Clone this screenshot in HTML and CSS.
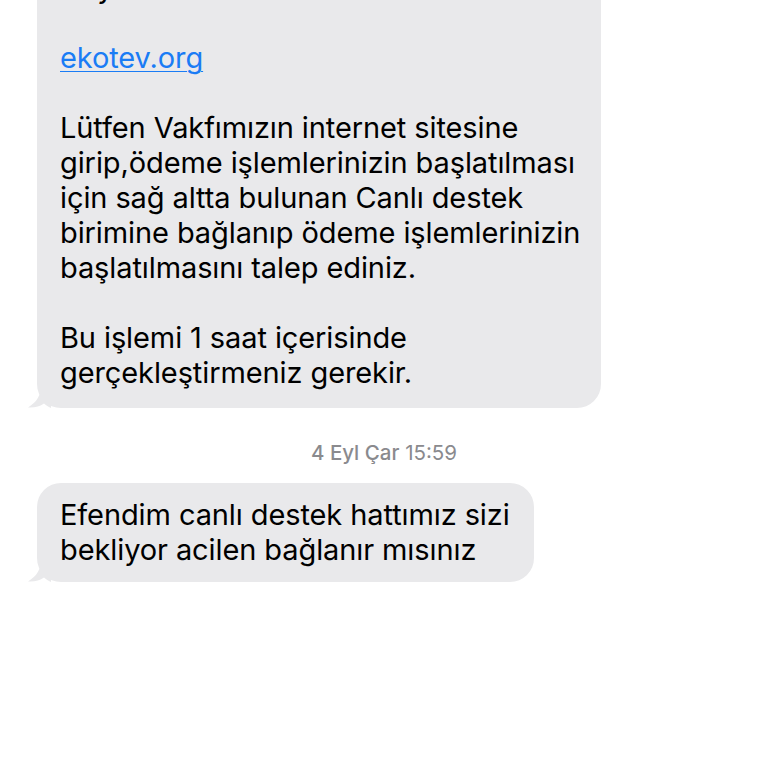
FILE: index.html
```html
<!DOCTYPE html>
<html lang="tr">
<head>
<meta charset="utf-8">
<link rel="stylesheet" href="styles.css">
</head>
<body>
<main class="thread">
  <div class="bubble bubble-first">
    <svg class="tail" viewBox="0 0 24 22" width="24" height="22" aria-hidden="true"><path d="M14 0 C14 9 10 16 1 21.5 C7 22 13 20.5 17 17.5 C19.5 19.5 22 21 24 22 L24 0 Z"/></svg>
    <p class="text">Hayırlı olsun<br><br><a class="link" href="#">ekotev.org</a><br><br>Lütfen Vakfımızın internet sitesine<br>girip,ödeme işlemlerinizin başlatılması<br>için sağ altta bulunan Canlı destek<br>birimine bağlanıp ödeme işlemlerinizin<br>başlatılmasını talep ediniz.<br><br>Bu işlemi 1 saat içerisinde<br>gerçekleştirmeniz gerekir.</p>
  </div>
  <div class="stamp"><span class="stamp-day">4 Eyl Çar</span> <span class="stamp-time">15:59</span></div>
  <div class="bubble bubble-second">
    <svg class="tail" viewBox="0 0 24 22" width="24" height="22" aria-hidden="true"><path d="M14 0 C14 9 10 16 1 21.5 C7 22 13 20.5 17 17.5 C19.5 19.5 22 21 24 22 L24 0 Z"/></svg>
    <p class="text">Efendim canlı destek hattımız sizi<br>bekliyor acilen bağlanır mısınız</p>
  </div>
</main>
</body>
</html>
```
FILE: styles.css
```css
html, body {
  margin: 0;
  padding: 0;
  background: #ffffff;
}
body {
  width: 768px;
  height: 768px;
  overflow: hidden;
  font-family: Inter, "Noto Sans", sans-serif;
  color: #000000;
}
.thread {
  display: flex;
  flex-direction: column;
  align-items: flex-start;
  padding-left: 37px;
  margin-top: -45px;
}
.bubble {
  position: relative;
  background: #e9e9eb;
  border-radius: 24px;
  box-sizing: border-box;
}
.bubble-first {
  width: 564px;
  padding: 15px 23px 18px 23px;
}
.bubble-second {
  padding: 14px 24px 15px 23px;
}
.tail {
  position: absolute;
  left: -10px;
  bottom: 0;
  fill: #e9e9eb;
}
.text {
  margin: 0;
  font-size: 29px;
  line-height: 35px;
  letter-spacing: -0.1px;
  white-space: nowrap;
}
.link {
  color: #1a7cf5;
  text-decoration: underline;
  text-decoration-thickness: 1px;
  text-underline-offset: 3px;
}
.stamp {
  align-self: stretch;
  margin-left: -37px;
  text-align: center;
  font-size: 20.5px;
  line-height: 24px;
  color: #8a8a8e;
  padding: 33px 0 18px 0;
}
.stamp-day {
  font-weight: 500;
}
.stamp-time {
  font-weight: 400;
}
```
